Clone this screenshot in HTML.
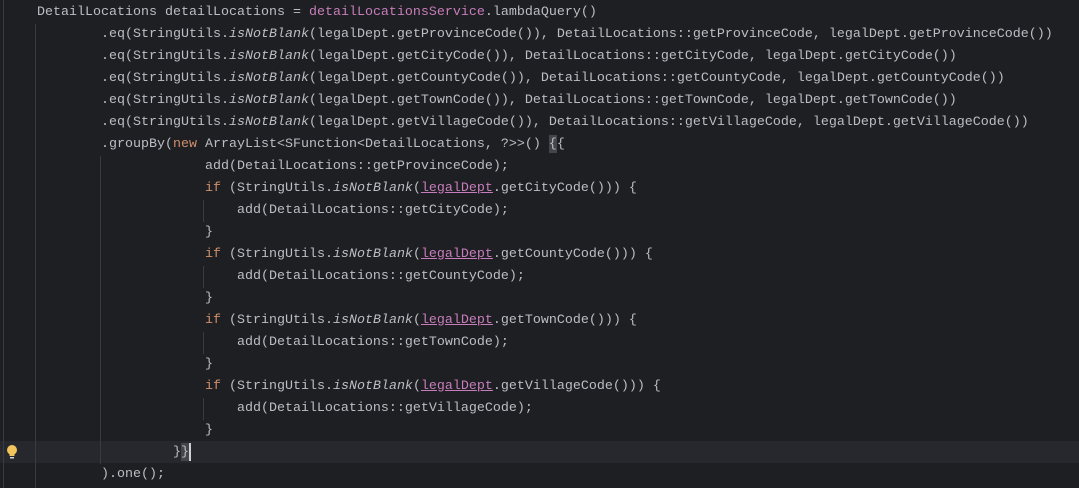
<!DOCTYPE html><html><head><style>
body{margin:0;width:1079px;height:488px;background:#1e1f22;overflow:hidden;position:relative;font-family:"Liberation Mono",monospace;font-size:13.33px;color:#bcbec4}
.r{position:absolute;left:37px;height:22px;line-height:22px;white-space:pre}
.p{color:#c77dbb}.k{color:#cf8e6d}.i{font-style:italic}.u{color:#c77dbb;text-decoration:underline}
.g{position:absolute;width:1px;background:#393b40}
</style></head><body>
<div style="position:absolute;left:0;top:441px;width:1079px;height:22px;background:#26282e"></div>
<div class="g" style="left:3px;top:0;height:488px"></div>
<div class="g" style="left:35px;top:24px;height:464px"></div>
<div class="g" style="left:100px;top:156px;height:308px"></div>
<div class="g" style="left:203px;top:200px;height:22px"></div>
<div class="g" style="left:203px;top:266px;height:22px"></div>
<div class="g" style="left:203px;top:332px;height:22px"></div>
<div class="g" style="left:203px;top:398px;height:22px"></div>
<div style="position:absolute;left:181px;top:443px;width:8px;height:18px;background:#43454a"></div>
<div style="position:absolute;left:189px;top:443px;width:2px;height:18px;background:#ced0d6"></div>
<div style="position:absolute;left:549px;top:135px;width:8px;height:18px;background:#43454a"></div>
<svg style="position:absolute;left:5px;top:444px" width="14" height="16"><circle cx="7" cy="6" r="5" fill="#f2c55c"/><rect x="4.5" y="10" width="5" height="2" fill="#f2c55c"/><rect x="5" y="13" width="4" height="1.5" fill="#ced0d6"/></svg>
<div class="r" style="top:2px">DetailLocations detailLocations = <span class="p">detailLocationsService</span>.lambdaQuery()</div>
<div class="r" style="top:24px">        .eq(StringUtils.<span class="i">isNotBlank</span>(legalDept.getProvinceCode()), DetailLocations::getProvinceCode, legalDept.getProvinceCode())</div>
<div class="r" style="top:46px">        .eq(StringUtils.<span class="i">isNotBlank</span>(legalDept.getCityCode()), DetailLocations::getCityCode, legalDept.getCityCode())</div>
<div class="r" style="top:68px">        .eq(StringUtils.<span class="i">isNotBlank</span>(legalDept.getCountyCode()), DetailLocations::getCountyCode, legalDept.getCountyCode())</div>
<div class="r" style="top:90px">        .eq(StringUtils.<span class="i">isNotBlank</span>(legalDept.getTownCode()), DetailLocations::getTownCode, legalDept.getTownCode())</div>
<div class="r" style="top:112px">        .eq(StringUtils.<span class="i">isNotBlank</span>(legalDept.getVillageCode()), DetailLocations::getVillageCode, legalDept.getVillageCode())</div>
<div class="r" style="top:134px">        .groupBy(<span class="k">new</span> ArrayList&lt;SFunction&lt;DetailLocations, ?&gt;&gt;() {{</div>
<div class="r" style="top:156px">                     add(DetailLocations::getProvinceCode);</div>
<div class="r" style="top:178px">                     <span class="k">if</span> (StringUtils.<span class="i">isNotBlank</span>(<span class="u">legalDept</span>.getCityCode())) {</div>
<div class="r" style="top:200px">                         add(DetailLocations::getCityCode);</div>
<div class="r" style="top:222px">                     }</div>
<div class="r" style="top:244px">                     <span class="k">if</span> (StringUtils.<span class="i">isNotBlank</span>(<span class="u">legalDept</span>.getCountyCode())) {</div>
<div class="r" style="top:266px">                         add(DetailLocations::getCountyCode);</div>
<div class="r" style="top:288px">                     }</div>
<div class="r" style="top:310px">                     <span class="k">if</span> (StringUtils.<span class="i">isNotBlank</span>(<span class="u">legalDept</span>.getTownCode())) {</div>
<div class="r" style="top:332px">                         add(DetailLocations::getTownCode);</div>
<div class="r" style="top:354px">                     }</div>
<div class="r" style="top:376px">                     <span class="k">if</span> (StringUtils.<span class="i">isNotBlank</span>(<span class="u">legalDept</span>.getVillageCode())) {</div>
<div class="r" style="top:398px">                         add(DetailLocations::getVillageCode);</div>
<div class="r" style="top:420px">                     }</div>
<div class="r" style="top:442px">                 }}</div>
<div class="r" style="top:464px">        ).one();</div>
</body></html>
